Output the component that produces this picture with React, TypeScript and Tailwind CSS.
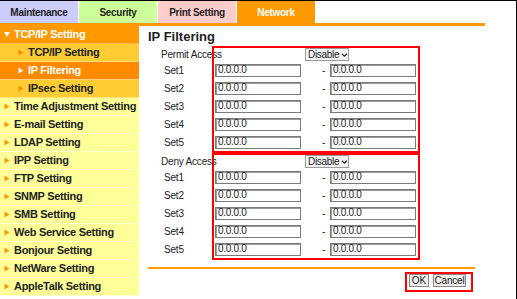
import React from 'react';

type NavKind = 'header' | 'sub' | 'active' | 'item';

interface NavItem {
  label: string;
  kind: NavKind;
}

const TABS = [
  { label: 'Maintenance', cls: 'bg-[#ccccff] text-[#222]' },
  { label: 'Security', cls: 'bg-[#ccff99] text-[#222]' },
  { label: 'Print Setting', cls: 'bg-[#ffcccc] text-[#222]' },
  { label: 'Network', cls: 'bg-[#ff9900] text-white' },
];

const NAV: NavItem[] = [
  { label: 'TCP/IP Setting', kind: 'header' },
  { label: 'TCP/IP Setting', kind: 'sub' },
  { label: 'IP Filtering', kind: 'active' },
  { label: 'IPsec Setting', kind: 'sub' },
  { label: 'Time Adjustment Setting', kind: 'item' },
  { label: 'E-mail Setting', kind: 'item' },
  { label: 'LDAP Setting', kind: 'item' },
  { label: 'IPP Setting', kind: 'item' },
  { label: 'FTP Setting', kind: 'item' },
  { label: 'SNMP Setting', kind: 'item' },
  { label: 'SMB Setting', kind: 'item' },
  { label: 'Web Service Setting', kind: 'item' },
  { label: 'Bonjour Setting', kind: 'item' },
  { label: 'NetWare Setting', kind: 'item' },
  { label: 'AppleTalk Setting', kind: 'item' },
];

const SETS = ['Set1', 'Set2', 'Set3', 'Set4', 'Set5'];

function Arrow({ color, down }: { color: string; down?: boolean }) {
  return (
    <svg width="6" height="7" viewBox="0 0 6 7" className="shrink-0">
      {down ? (
        <polygon points="0,1 6,1 3,6" fill={color} />
      ) : (
        <polygon points="0.5,0.5 5.5,3.5 0.5,6.5" fill={color} />
      )}
    </svg>
  );
}

function NavRow({ item }: { item: NavItem }) {
  // Header: orange bar with a down arrow
  if (item.kind === 'header') {
    return (
      <div className="h-[18px] flex items-center pl-[4px] gap-[4px] bg-[#ff9900] text-white border-b border-[#ffb84d]">
        <Arrow color="#ffffff" down />
        <span>{item.label}</span>
      </div>
    );
  }
  if (item.kind === 'sub' || item.kind === 'active') {
    const active = item.kind === 'active';
    return (
      <div
        className={
          active
            ? 'h-[18px] flex items-center pl-[18px] gap-[4px] bg-[#ff8a00] text-white border-b border-[#ffd27a]'
            : 'h-[18px] flex items-center pl-[18px] gap-[4px] bg-[#ffcc33] text-[#222] border-b border-[#ffe27a]'
        }
      >
        <Arrow color={active ? '#ffffff' : '#ff8a00'} />
        <span>{item.label}</span>
      </div>
    );
  }
  return (
    <div className="h-[18px] flex items-center pl-[4px] gap-[4px] bg-[#ffff99] text-[#222] border-b border-[#ffffcc]">
      <Arrow color="#ff9900" />
      <span>{item.label}</span>
    </div>
  );
}

function IpInput() {
  return (
    <div className="w-[86px] h-[13px] border border-[#7a7a7a] shadow-[inset_1px_1px_0_#9a9a9a] bg-white flex items-center pl-[2px] text-[10px] leading-none tracking-[-0.3px] text-[#222]">
      0.0.0.0
    </div>
  );
}

function DisableSelect() {
  return (
    <div className="ml-[91px] w-[44px] h-[13px] border border-[#9a9a9a] bg-[#f4f4f4] flex items-center pl-[2px] gap-[2px] text-[10px] leading-none tracking-[-0.3px] text-[#222]">
      <span>Disable</span>
      <svg width="8" height="6" viewBox="0 0 8 6">
        <polyline points="1,1.5 4,4.5 7,1.5" fill="none" stroke="#222" strokeWidth="1.4" />
      </svg>
    </div>
  );
}

function FilterSection({ title }: { title: string }) {
  return (
    <div className="flex">
      {/* Etiquetas a la izquierda del recuadro */}
      <div className="w-[64px] pt-[2px] text-[10px] tracking-[-0.2px] text-[#222] whitespace-nowrap">
        <div className="h-[13px] flex items-center pl-[13px]">{title}</div>
        {SETS.map((s) => (
          <div key={s} className="h-[18px] flex items-center pl-[16px]">
            {s}
          </div>
        ))}
      </div>

      {/* Recuadro rojo */}
      <div className="w-[208px] border-2 border-[#ff0000]">
        <div className="h-[13px] flex items-start">
          <DisableSelect />
        </div>
        {SETS.map((s) => (
          <div key={s} className="h-[18px] flex items-center pl-px">
            <IpInput />
            <span className="w-[29px] pl-[21px] text-[10px] text-[#222]">-</span>
            <IpInput />
          </div>
        ))}
      </div>
    </div>
  );
}

export default function App() {
  return (
    <div className="w-[517px] h-[299px] overflow-hidden bg-white border-t border-r border-black font-['Liberation_Sans',Arial,sans-serif] text-[#222]">
      {/* Pestañas */}
      <div className="flex h-[22px] gap-px">
        {TABS.map((t) => (
          <div
            key={t.label}
            className={`w-[78px] flex items-center justify-center text-[10px] font-bold tracking-[-0.3px] ${t.cls}`}
          >
            {t.label}
          </div>
        ))}
      </div>
      <div className="h-[3px] w-[485px] bg-[#ff9900]" />

      <div className="flex">
        {/* Menú lateral */}
        <div className="w-[139px] flex flex-col text-[11px] font-bold tracking-[-0.3px]">
          {NAV.map((item, i) => (
            <NavRow key={i} item={item} />
          ))}
        </div>

        {/* Contenido */}
        <div className="ml-[9px] flex flex-col">
          <div className="h-[20px] pt-[3px] text-[13px] font-bold leading-[15px]">IP Filtering</div>
          <FilterSection title="Permit Access" />
          <FilterSection title="Deny Access" />

          <div className="mt-[7px] h-[2px] w-[327px] bg-[#ff9900]" />
          <div className="mt-[3px] ml-[257px] w-[68px] h-[20px] border-2 border-[#ff0000] flex items-start gap-[4px] pl-[2px]">
            <button className="h-[13px] w-[20px] border border-[#8a8a8a] bg-[#efefef] text-[10px] leading-none text-[#222]">
              OK
            </button>
            <button className="h-[13px] w-[33px] border border-[#8a8a8a] bg-[#efefef] text-[10px] leading-none text-[#222] tracking-[-0.2px]">
              Cancel
            </button>
          </div>
        </div>
      </div>
    </div>
  );
}
